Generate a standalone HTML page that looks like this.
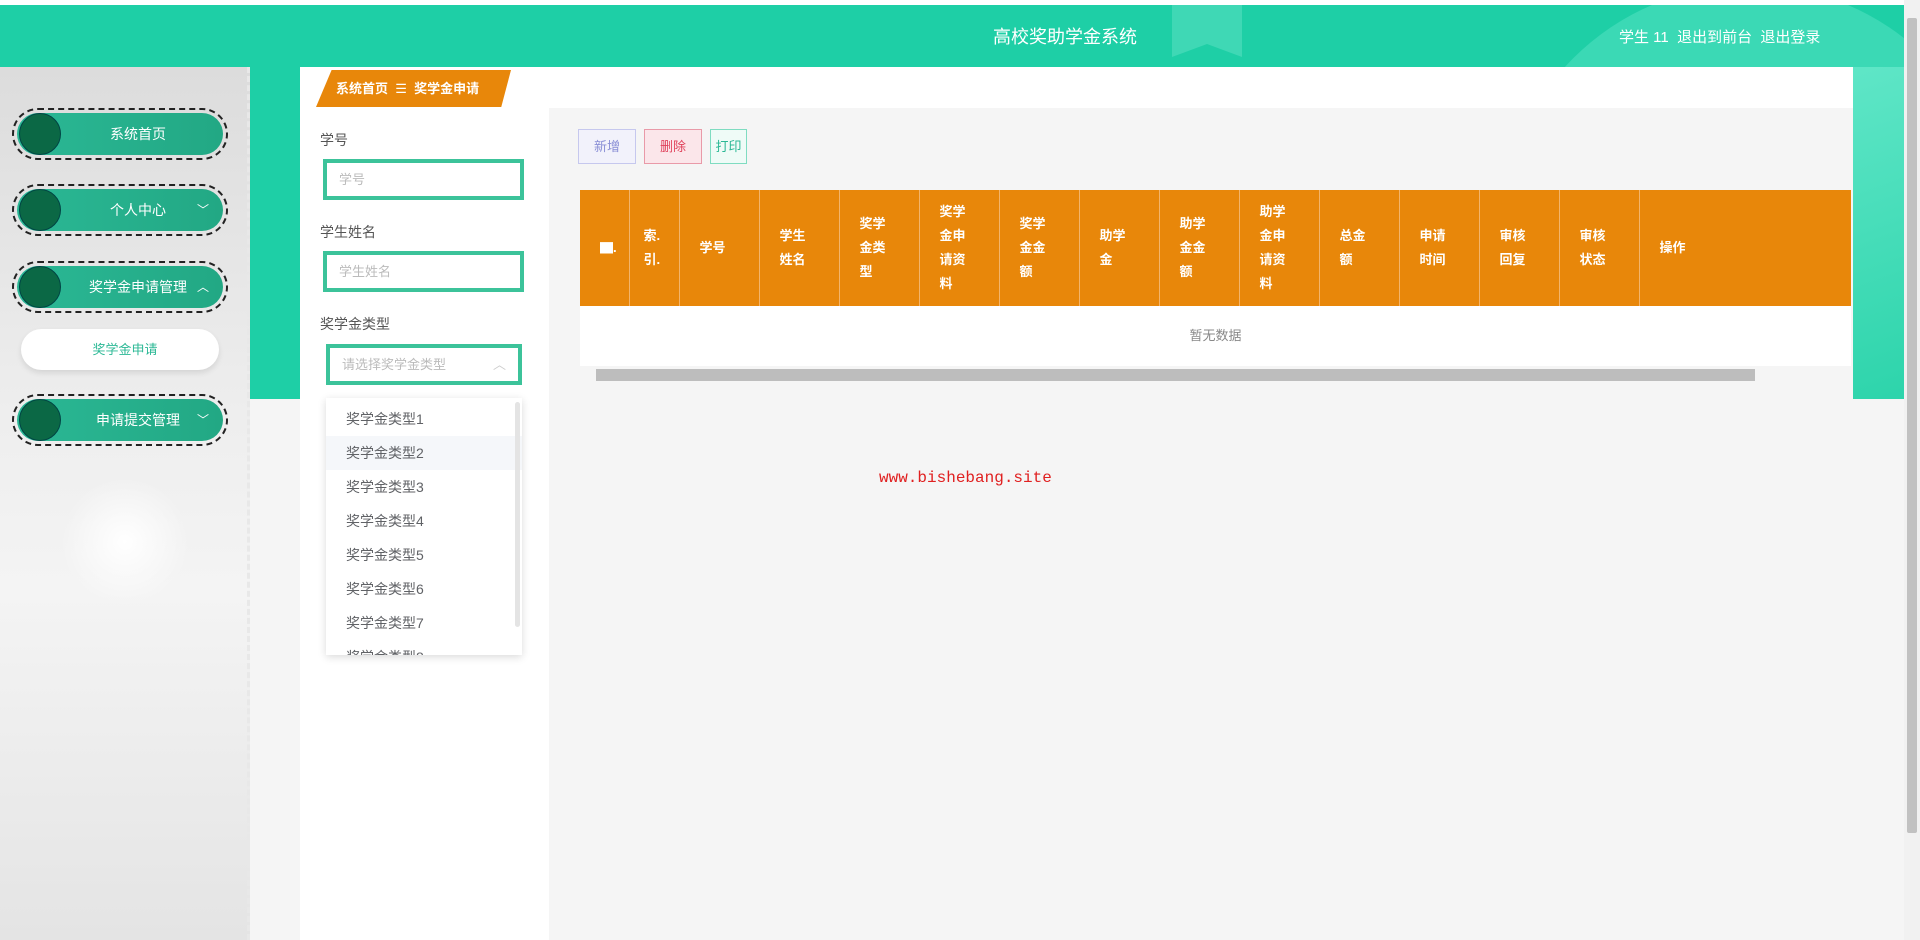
<!DOCTYPE html>
<html><head><meta charset="utf-8"><style>
*{margin:0;padding:0;box-sizing:border-box}
body{width:1920px;height:940px;overflow:hidden;background:#f5f5f5;font-family:"Liberation Sans","Noto Sans CJK SC",sans-serif;position:relative}
.abs{position:absolute}
#top{left:0;top:0;width:1920px;height:5px;background:#fff}
#hdr{left:0;top:5px;width:1904px;height:62px;background:#1ecfa6;overflow:hidden}
#band{left:250px;top:67px;width:1654px;height:332px;background:#1ecfa6}
#sb{left:1904px;top:0;width:16px;height:940px;background:#f1f1f1}
#sbt{left:1907px;top:18px;width:10px;height:815px;background:#c1c1c1;border-radius:2px}
#side{left:0;top:67px;width:250px;height:873px;background:linear-gradient(180deg,#dcdcdc,#eeeeee 40%,#f4f4f4 60%,#e4e4e4);border-right:3px dashed #e8e8e8}
.pill{position:absolute;left:12px;width:216px;height:52px;border:2px dashed #222;border-radius:28px;padding:3px}
.pill .in{width:100%;height:100%;border-radius:24px;background:linear-gradient(90deg,#2bb895,#22a884);position:relative;color:#fff;font-size:14px;text-align:center;line-height:42px;padding-left:36px}
.pill .c{position:absolute;left:2px;top:0;width:42px;height:42px;border-radius:50%;background:#0b6845;border:1px solid #044}
.pill .ar{position:absolute;right:14px;top:0;font-size:12px}
#main{left:300px;top:67px;width:1553px;height:873px;background:#fff}
#gray{left:549px;top:108px;width:1304px;height:832px;background:#f5f5f5}
#bc{left:316px;top:70px;width:195px;height:37px;background:#e8870a;clip-path:polygon(8% 0,100% 0,95% 100%,0 100%);color:#fff;font-size:13px;font-weight:bold;line-height:37px;padding-left:20px}
.lab{position:absolute;left:320px;font-size:14px;color:#555}
.inp{position:absolute;left:323px;width:201px;height:41px;border:4px solid #3cc39a;background:#fff;color:#bbb;font-size:13px;line-height:33px;padding-left:12px}
#dd{left:326px;top:398px;width:196px;height:257px;background:#fff;box-shadow:0 2px 8px rgba(0,0,0,.15);overflow:hidden}
#dd div{height:34px;line-height:34px;padding-left:20px;font-size:14px;color:#606266}
.btn{position:absolute;top:129px;height:35px;font-size:13px;line-height:33px;text-align:center;border:1px solid}
table{position:absolute;left:580px;top:190px;border-collapse:collapse}
th{background:#e8870a;color:#fff;font-size:13px;font-weight:bold;height:116px;border-right:1px solid #f3b46a;text-align:left;padding-left:20px;line-height:24px;vertical-align:middle}
</style></head><body>
<div class="abs" id="top"></div>
<div class="abs" id="hdr">
<div class="abs" style="left:1172px;top:0;width:70px;height:52px;background:#3fd8b5;clip-path:polygon(0 0,100% 0,100% 100%,50% 75%,0 100%)"></div>
<div class="abs" style="left:1500px;top:-20px;width:500px;height:500px;border-radius:50%;background:#4fdfc0;opacity:.6"></div>
<div class="abs" style="left:0;width:2130px;top:18px;text-align:center;color:#fff;font-size:18px">高校奖助学金系统</div>
<div class="abs" style="left:1619px;top:21px;color:#fff;font-size:15px">学生 11 &nbsp;退出到前台&nbsp; 退出登录</div>
</div>
<div class="abs" id="band"></div>
<div class="abs" style="left:1853px;top:67px;width:51px;height:332px;background:linear-gradient(160deg,#5fe6c7,#2dd4ab)"></div>
<div class="abs" id="sb"></div><div class="abs" id="sbt"></div>
<div class="abs" id="side">
<div class="abs" style="left:60px;top:410px;width:130px;height:130px;border-radius:50%;background:radial-gradient(#fff,rgba(255,255,255,0) 70%)"></div>
</div>
<div class="pill" style="top:108px"><div class="in"><div class="c"></div>系统首页</div></div>
<div class="pill" style="top:184px"><div class="in"><div class="c"></div>个人中心<span class="ar">﹀</span></div></div>
<div class="pill" style="top:261px"><div class="in"><div class="c"></div>奖学金申请管理<span class="ar">︿</span></div></div>
<div class="abs" style="left:21px;top:329px;width:198px;height:41px;border-radius:21px;background:#fff;box-shadow:0 3px 6px rgba(0,0,0,.1);color:#2bb895;font-size:13px;line-height:41px;text-align:center;padding-left:10px">奖学金申请</div>
<div class="pill" style="top:394px"><div class="in"><div class="c"></div>申请提交管理<span class="ar">﹀</span></div></div>
<div class="abs" id="main"></div>
<div class="abs" id="gray"></div>
<div class="abs" id="bc">系统首页 &nbsp;<span style="font-weight:normal">☰</span>&nbsp; 奖学金申请</div>
<div class="lab" style="top:130px">学号</div>
<div class="inp" style="top:159px">学号</div>
<div class="lab" style="top:222px">学生姓名</div>
<div class="inp" style="top:251px">学生姓名</div>
<div class="lab" style="top:314px">奖学金类型</div>
<div class="inp" style="top:344px;left:326px;width:196px;border-width:4px">请选择奖学金类型<span style="position:absolute;right:12px;color:#ccc">︿</span></div>
<div class="abs" id="dd">
<div style="margin-top:4px">奖学金类型1</div><div style="background:#f5f7fa">奖学金类型2</div><div>奖学金类型3</div><div>奖学金类型4</div><div>奖学金类型5</div><div>奖学金类型6</div><div>奖学金类型7</div><div>奖学金类型8</div>
<span class="abs" style="right:2px;top:4px;width:5px;height:225px;background:#e4e4e4;border-radius:3px"></span>
</div>
<div class="btn" style="left:578px;width:58px;color:#8a8fd6;border-color:#c6c8ee;background:#f2f2fb">新增</div>
<div class="btn" style="left:644px;width:58px;color:#e0405a;border-color:#e99aa8;background:#fbe6ea">删除</div>
<div class="btn" style="left:710px;width:37px;color:#2bb895;border-color:#7fdcc1;background:#effbf7">打印</div>
<table><tr>
<th style="width:49px">▇.</th><th style="width:50px;padding-left:14px">索.<br>引.</th><th style="width:80px">学号</th><th style="width:80px">学生<br>姓名</th><th style="width:80px">奖学<br>金类<br>型</th><th style="width:80px">奖学<br>金申<br>请资<br>料</th><th style="width:80px">奖学<br>金金<br>额</th><th style="width:80px">助学<br>金</th><th style="width:80px">助学<br>金金<br>额</th><th style="width:80px">助学<br>金申<br>请资<br>料</th><th style="width:80px">总金<br>额</th><th style="width:80px">申请<br>时间</th><th style="width:80px">审核<br>回复</th><th style="width:80px">审核<br>状态</th><th style="width:212px;border:none">操作</th>
</tr></table>
<div class="abs" style="left:580px;top:306px;width:1271px;height:60px;background:#fff;text-align:center;line-height:60px;color:#888;font-size:13px">暂无数据</div>
<div class="abs" style="left:580px;top:366px;width:1271px;height:17px;background:#f5f5f5"></div>
<div class="abs" style="left:596px;top:369px;width:1159px;height:12px;background:#bdbdbd"></div>
<div class="abs" style="left:879px;top:469px;color:#e02020;font-family:'Liberation Mono',monospace;font-size:16px">www.bishebang.site</div>
</body></html>
